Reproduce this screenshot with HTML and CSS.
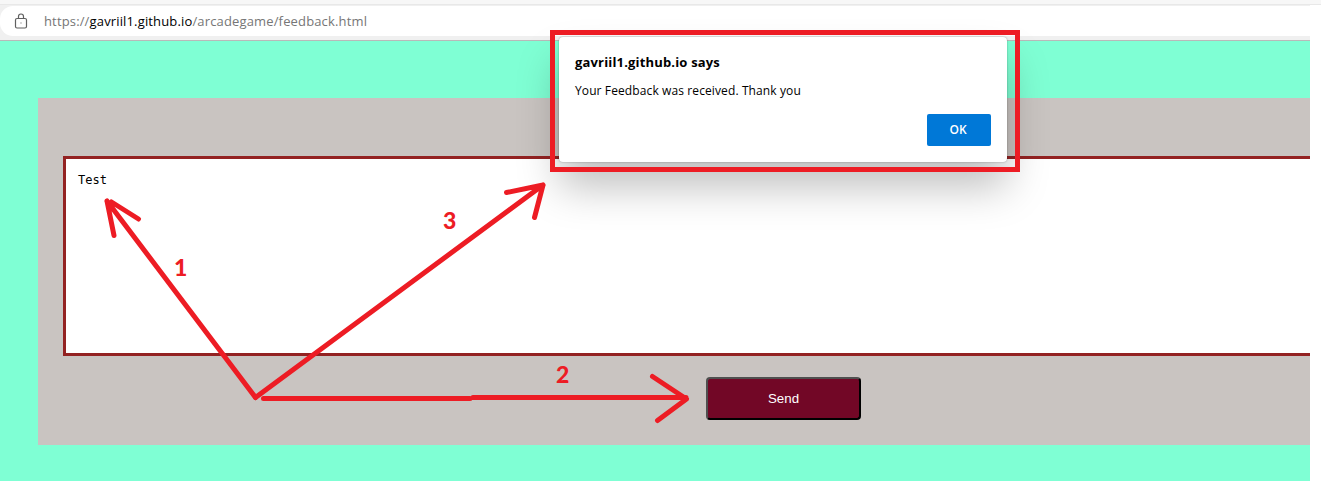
FILE: index.html
```html
<!DOCTYPE html>
<html lang="en">
<head>
<meta charset="utf-8">
<title>Feedback</title>
<link rel="stylesheet" href="styles.css">
</head>
<body>
<div class="screen">
  <div class="tabstrip"></div>
  <div class="window">
    <header class="toolbar">
      <div class="address">
        <svg class="lock" width="14" height="17" viewBox="0 0 14 17" fill="none" stroke="#606060" stroke-width="1.2">
          <rect x="1.5" y="5.5" width="11" height="9.500" rx="1.5"/>
          <path d="M4.500 5.500V3.500a2.500 2.500 0 0 1 5 0v2"/>
          <rect x="6.500" y="9.500" width="1" height="1" fill="#606060" stroke="none"/>
        </svg>
        <span class="url">https://<b class="host">gavriil1.github.io</b>/arcadegame/feedback.html</span>
      </div>
    </header>
    <main class="page">
      <form class="panel">
        <div class="field"><span class="typed">Test</span></div>
        <button class="send" type="button">Send</button>
      </form>
    </main>
  </div>
  <section class="dialog">
    <h1 class="title"><span>gavriil1.github.io says</span></h1>
    <p class="message"><span>Your Feedback was received. Thank you</span></p>
    <button class="ok" type="button">OK</button>
  </section>
  <svg class="marks" width="1321" height="481" viewBox="0 0 1321 481">
    <rect x="552.5" y="32.500" width="465" height="137" stroke-linejoin="miter"/>
    <path d="M255.500 397.500L107 201M114 235.500L107 201M111.500 202L138.500 219"/>
    <path d="M255.500 397.500L543 185M506.500 192.500L543 185L534.500 217.500"/>
    <path d="M263.500 398.500H470M473 397.500H686M652.500 376.500L686.500 399L657.500 420.500"/>
    <text x="174" y="276">1</text>
    <text x="556" y="383">2</text>
    <text x="443" y="229">3</text>
  </svg>
</div>
</body>
</html>
```
FILE: styles.css
```css
* { box-sizing: border-box; }
body { margin: 0; background: #fff; }
.screen { position: relative; width: 1321px; height: 481px; overflow: hidden; }
.tabstrip { height: 5px; background: #f7f7f7; border-bottom: 1px solid #e8e8e8; }
.window { width: 1310px; }
.toolbar { height: 36px; padding-top: 1px; background: #f0f0f0; border-bottom: 1px solid #b9b9b9; }
.address { display: flex; align-items: center; height: 30px; padding-left: 14px; gap: 16px; background: #fff; border-radius: 13px 0 0 13px; }
.lock { flex: none; }
.url { font: 13px/20px "Open Sans", "Noto Sans", sans-serif; letter-spacing: .15px; color: #767676; white-space: nowrap; }
.host { font-weight: 400; color: #000; }
.page { height: 440px; padding: 57px 0 36px 38px; background: #7fffd4; }
.panel { display: flex; flex-direction: column; height: 347px; padding: 58px 0 0 25px; background: #c9c4c1; }
.field { height: 200px; padding: 13px 12px; border: 3px solid #932222; border-right: 0; background: #fff; font: 12px/16px "DejaVu Sans Mono", monospace; color: #000; }
.send { width: 155px; height: 43px; margin: 21px 0 0 643px; padding: 0; border: 2px outset #000; border-color: #4f4f4f #000 #000 #4f4f4f; border-radius: 4px; background: #720726; color: #fff; font: 13.333px "Liberation Sans", Arial, sans-serif; }
.dialog { position: absolute; left: 559px; top: 37px; width: 448px; height: 125px; padding: 15px 16px; display: flex; flex-direction: column; background: #fff; border-radius: 4px; box-shadow: 0 0 2px rgba(0,0,0,.35), 0 25px 42px rgba(0,0,0,.25); font-family: "Open Sans", "Noto Sans", sans-serif; color: #000; }
.title { margin: 0; font-size: 13px; line-height: 20px; font-weight: 700; letter-spacing: .17px; }
.message { margin: 10px 0 0; font-size: 12px; line-height: 18px; letter-spacing: .11px; }
.ok { align-self: flex-end; width: 64px; height: 32px; margin-top: 14px; padding: 0 2px 2px 0; border: 0; border-radius: 2px; background: #0078d7; color: #fff; font: 600 12px "Open Sans", "Noto Sans", sans-serif; }
.marks { position: absolute; left: 0; top: 0; fill: none; stroke: #ed1c24; stroke-width: 5; stroke-linecap: round; stroke-linejoin: round; }
.marks text { fill: #ed1c24; stroke: none; font: 900 23px Lato, sans-serif; }
```
